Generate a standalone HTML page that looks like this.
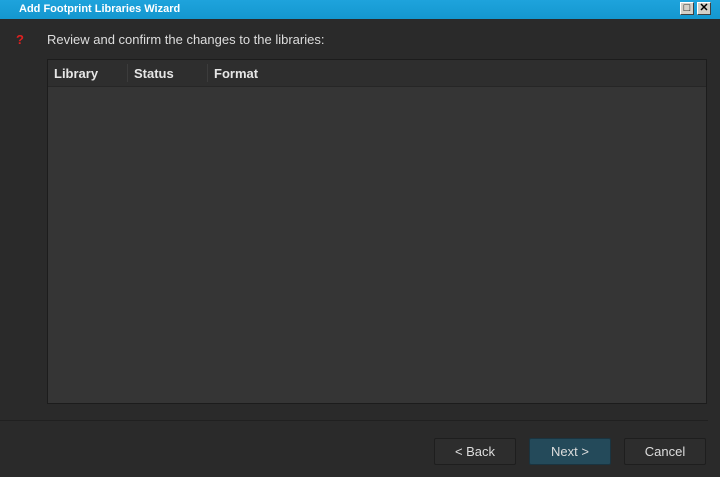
<!DOCTYPE html>
<html><head><style>
body{margin:0;width:720px;height:477px;background:#2a2a2a;font-family:"Liberation Sans",sans-serif;position:relative;overflow:hidden}
.title{position:absolute;left:0;top:0;width:720px;height:19px;background:linear-gradient(#1ea3dc,#1497cf);color:#fff;font-weight:bold;font-size:11px;line-height:19px}
.title span{position:absolute;left:19px}
.wb{position:absolute;top:2px;width:14px;height:13px;background:#d4d0c8;border:1px solid #fff;border-right-color:#404040;border-bottom-color:#404040;box-sizing:border-box;font-size:11px;line-height:11px;text-align:center;color:#000;font-weight:bold}
.q{position:absolute;left:16px;top:32px;color:#e02020;font-weight:bold;font-size:13px}
.msg{position:absolute;left:47px;top:32px;color:#ddd;font-size:13px}
.list{position:absolute;left:47px;top:59px;width:660px;height:345px;background:#353535;border:1px solid #1c1c1c;box-sizing:border-box}
.hdr{height:26px;background:#2e2e2e;border-bottom:1px solid #262626;color:#e6e6e6;font-weight:bold;font-size:13px;position:relative}
.hdr span{position:absolute;top:6px}
.sep{position:absolute;top:4px;width:1px;height:18px;background:#3c3c3c}
.line{position:absolute;left:0;top:420px;width:708px;height:1px;background:#202020}
.btn{position:absolute;top:438px;height:27px;width:82px;box-sizing:border-box;border:1px solid #1e1e1e;border-radius:2px;background:#2d2d2d;color:#ddd;font-size:13px;text-align:center;line-height:26px}
</style></head><body>
<div class="title"><span>Add Footprint Libraries Wizard</span>
<div class="wb" style="left:680px">□</div><div class="wb" style="left:697px">✕</div></div>
<div class="q">?</div>
<div class="msg">Review and confirm the changes to the libraries:</div>
<div class="list"><div class="hdr"><span style="left:6px">Library</span><div class="sep" style="left:79px"></div><span style="left:86px">Status</span><div class="sep" style="left:159px"></div><span style="left:166px">Format</span></div></div>
<div class="line"></div>
<div class="btn" style="left:434px">&lt; Back</div>
<div class="btn" style="left:529px;background:#244a5a;border-color:#1a3440">Next &gt;</div>
<div class="btn" style="left:624px">Cancel</div>
</body></html>
